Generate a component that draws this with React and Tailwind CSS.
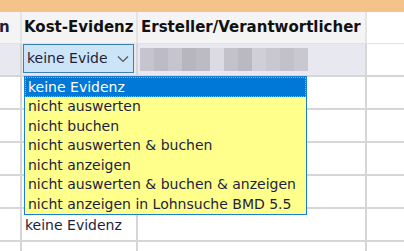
import React from "react";

const OPTIONS = [
  "keine Evidenz",
  "nicht auswerten",
  "nicht buchen",
  "nicht auswerten & buchen",
  "nicht anzeigen",
  "nicht auswerten & buchen & anzeigen",
  "nicht anzeigen in Lohnsuche BMD 5.5",
];

const BLUR = [
  "bg-[#c6c5cf]",
  "bg-[#bdbcc6]",
  "bg-[#c6c5cf]",
  "bg-[#b7b6bf]",
  "bg-[#bcbbc4]",
  "bg-[#dcdbe4]",
  "bg-[#c3c2cb]",
  "bg-[#bab9c3]",
  "bg-[#d0cfd8]",
  "bg-[#c9c8d1]",
  "bg-[#c2c1cb]",
  "bg-[#c9c8d1]",
];

function BodyRow({ text }) {
  return (
    <div className="flex h-[33px] border-b-2 border-[#d6d6d6]">
      <div className="w-[22px] shrink-0 border-r-2 border-[#d6d6d6] bg-white" />
      <div className="w-[116px] shrink-0 border-r-2 border-[#d6d6d6] bg-white flex items-center pl-[3px] pt-[1px]">
        {text}
      </div>
      <div className="w-[229px] shrink-0 border-r-2 border-[#d6d6d6] bg-white" />
    </div>
  );
}

export default function App() {
  return (
    <div
      className="w-[404px] h-[251px] overflow-hidden bg-white text-[#1e1e3c] text-[14px] relative"
      style={{ fontFamily: '"DejaVu Sans", Verdana, sans-serif' }}
    >
      <div className="h-[12px] bg-[#f3c38b]" />

      {/* header */}
      <div className="flex h-[32px] border-b border-[#e2e2e2]">
        <div className="w-[22px] shrink-0 bg-[#f4f4f4] border-r-2 border-[#e4e4e4] flex items-center font-bold text-[15px] overflow-hidden">
          <span className="ml-[-1px]">n</span>
        </div>
        <div className="w-[116px] shrink-0 bg-[#f4f4f4] border-r-2 border-[#e4e4e4] flex items-center pl-[2px] font-bold text-[15px] text-[#111]">
          Kost-Evidenz
        </div>
        <div className="w-[229px] shrink-0 bg-[#f4f4f4] border-r-2 border-[#e4e4e4] flex items-center pl-[3px] font-bold text-[15px] text-[#111] whitespace-nowrap overflow-hidden">
          Ersteller/Verantwortlicher
        </div>
      </div>

      {/* filter row */}
      <div className="flex h-[33px] border-b-2 border-[#d6d6d6]">
        <div className="w-[22px] shrink-0 bg-[#e8e8f1] border-r-2 border-[#d6d6d6]" />
        <div className="w-[116px] shrink-0 bg-[#e8e8f1] border-r-2 border-[#d6d6d6] pl-[1px] pr-[2px] pb-[2px]">
          <div className="h-full bg-[#cce4f7] border border-[#3c7fb1] flex items-center pl-[3px] overflow-hidden">
            <span className="w-[80px] overflow-hidden whitespace-nowrap">keine Evidenz</span>
            <svg width="12" height="8" viewBox="0 0 12 8" className="ml-[10px]">
              <path d="M1 1.5 L6 6.5 L11 1.5" fill="none" stroke="#555" strokeWidth="1.2" />
            </svg>
          </div>
        </div>
        <div className="w-[229px] shrink-0 bg-[#e8e8f1] border-r-2 border-[#d6d6d6] flex items-center pl-[2px]">
          <div className="flex h-[23px]">
            {BLUR.map((c, i) => (
              <div key={i} className={`w-[14px] ${c}`} />
            ))}
          </div>
        </div>
      </div>

      <BodyRow />
      <BodyRow />
      <BodyRow />
      <BodyRow />
      <BodyRow text="keine Evidenz" />
      <BodyRow />

      {/* dropdown list */}
      <div className="absolute left-[24px] top-[76px] w-[283px] border border-[#1a7fd4] bg-[#ffff8c] leading-[19.5px]">
        {OPTIONS.map((o, i) =>
          i === 0 ? (
            <div
              key={o}
              className="bg-[#0078d7] text-white border border-dotted border-[#e2a25a] pl-[2px] h-[20px] leading-[18px]"
            >
              {o}
            </div>
          ) : (
            <div key={o} className="pl-[3px] h-[19.5px] whitespace-nowrap">
              {o}
            </div>
          )
        )}
      </div>
    </div>
  );
}
